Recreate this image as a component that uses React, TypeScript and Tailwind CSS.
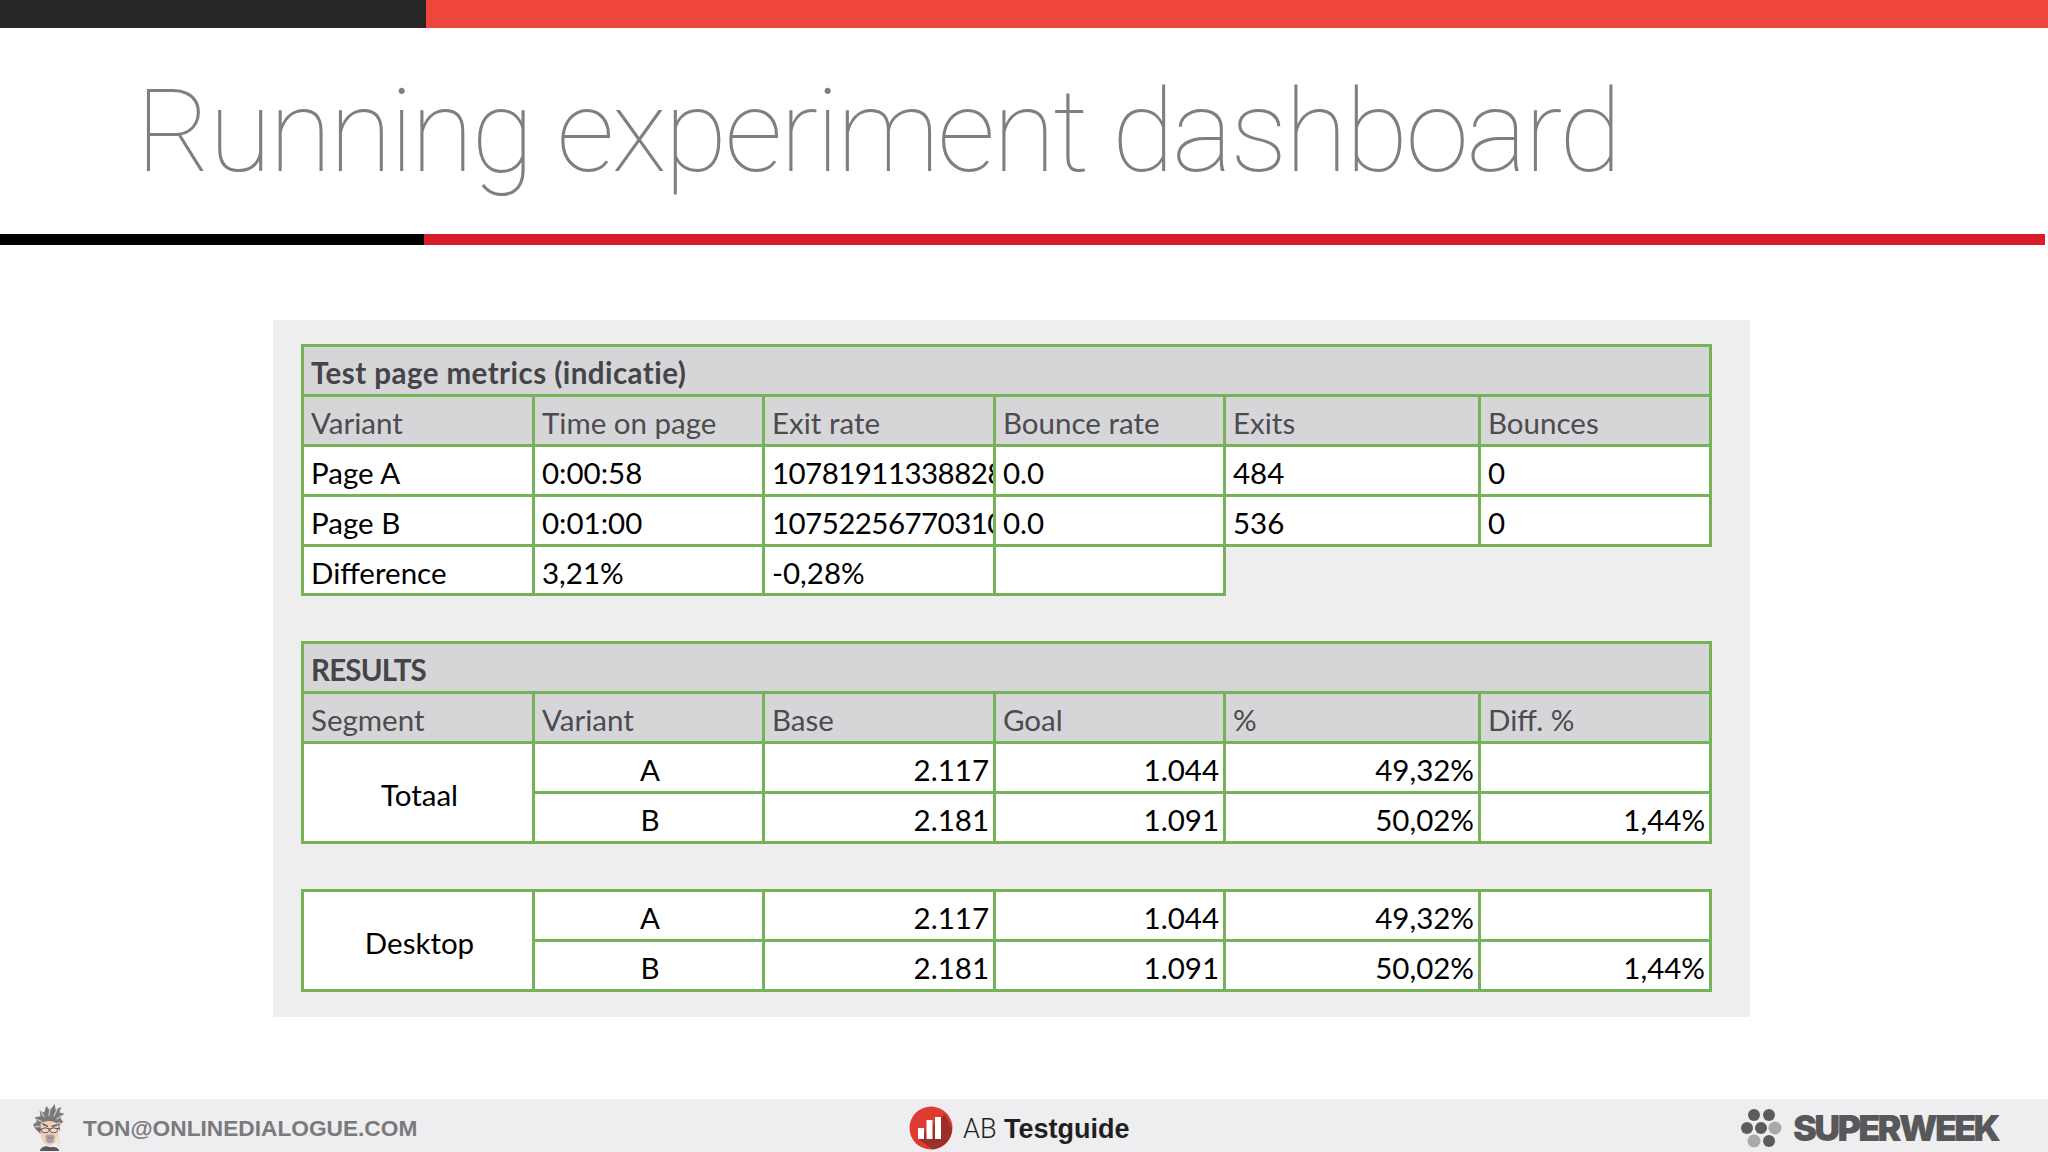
const metricsHead = ['Variant', 'Time on page', 'Exit rate', 'Bounce rate', 'Exits', 'Bounces'];
const metricsRows = [
  ['Page A', '0:00:58', '107819113388289', '0.0', '484', '0'],
  ['Page B', '0:01:00', '107522567703102', '0.0', '536', '0'],
];
const resultsHead = ['Segment', 'Variant', 'Base', 'Goal', '%', 'Diff. %'];
const segmentRows = [
  ['A', '2.117', '1.044', '49,32%', ''],
  ['B', '2.181', '1.091', '50,02%', '1,44%'],
];

const cell = 'h-[50px] border-[3px] border-[#76b257] overflow-hidden whitespace-nowrap pt-[5px] pb-0 pl-[7px] pr-[4px] align-middle';
const headCell = `${cell} bg-[#d6d6d8] text-left`;
const bodyCell = `${cell} bg-white text-black`;
const lastRowCell = `${bodyCell} !h-[49px]`;

function Cols() {
  return (
    <colgroup>
      <col className="w-[231px]" />
      <col className="w-[230px]" />
      <col className="w-[231px]" />
      <col className="w-[230px]" />
      <col className="w-[255px]" />
      <col className="w-[231px]" />
    </colgroup>
  );
}

function TableTitle({ text, className }: { text: string; className: string }) {
  return (
    <tr>
      <th colSpan={6} className={`${headCell} font-bold text-[#444449] ${className}`}>{text}</th>
    </tr>
  );
}

function HeadRow({ cells }: { cells: string[] }) {
  return (
    <tr>
      {cells.map((c) => (
        <th key={c} className={`${headCell} font-normal text-[#4b4b50]`}>{c}</th>
      ))}
    </tr>
  );
}

function Segment({ name }: { name: string }) {
  return (
    <>
      {segmentRows.map((row, i) => (
        <tr key={row[0]}>
          {i === 0 && <td rowSpan={2} className={`${bodyCell} text-center`}>{name}</td>}
          <td className={`${bodyCell} text-center`}>{row[0]}</td>
          {row.slice(1).map((v, j) => (
            <td key={j} className={`${bodyCell} text-right`}>{v}</td>
          ))}
        </tr>
      ))}
    </>
  );
}

const tableClass = "w-[1408px] table-fixed border-collapse font-['Lato',sans-serif] text-[29.5px] leading-none";

function Avatar() {
  return (
    <svg viewBox="0 0 36 50" className="w-[34px] h-[47px]">
      <path d="M4 27 L1 22 L5 19 L3 14 L9 13 L8 7 L13 9 L15 2 L19 7 L24 0 L25 6 L31 3 L29 9 L34 10 L30 15 L33 19 L29 23 L30 29 L24 22 L12 22 L9 32 Z" fill="#77787a" />
      <path d="M9 7 L13 14 M19 4 L18 13 M27 5 L23 13 M4 16 L11 19 M32 12 L26 16 M3 24 L8 24 M31 21 L27 20" stroke="#c4c4c6" strokeWidth="1.5" />
      <path d="M9 21 C13 17 24 17 28 22 L28 33 C28 39 23 44 18 44 C13 44 9 38 9 31 Z" fill="#f3cdb6" />
      <path d="M11 21 L17 24 M27 22 L21 24" stroke="#5a5a5c" strokeWidth="1.6" />
      <path d="M7 27 L29 26" stroke="#5a4a48" strokeWidth="1.2" />
      <ellipse cx="14" cy="28" rx="4" ry="2.6" fill="#eadbd2" stroke="#6a4f4a" strokeWidth="1" />
      <ellipse cx="23" cy="28" rx="4" ry="2.6" fill="#eadbd2" stroke="#6a4f4a" strokeWidth="1" />
      <path d="M14 34 C17 32 21 32 24 34 L23 40 C20 43 16 42 15 39 Z" fill="#a3a3a5" />
      <path d="M17 36 L22 36" stroke="#c9574c" strokeWidth="1" />
      <path d="M25 37 L29 32 L31 40 L27 45 Z" fill="#efe0d2" />
      <path d="M8 50 C10 45 15 44 19 46 C24 45 28 46 29 50 Z" fill="#59585a" />
    </svg>
  );
}

function GuideLogo() {
  return (
    <svg viewBox="0 0 44 44" className="w-[44px] h-[44px]">
      <circle cx="22" cy="22" r="21.5" fill="#de3b33" />
      <path d="M9 33 L36 8 L43 22 A21.5 21.5 0 0 1 24 43.4 Z" fill="#9c2f27" />
      <rect x="9" y="22" width="6" height="11" fill="#fff" />
      <rect x="17.5" y="14" width="6" height="19" fill="#fff" />
      <rect x="26" y="11" width="6" height="22" fill="#fff" />
    </svg>
  );
}

function WeekLogo() {
  return (
    <svg viewBox="0 0 42 40" className="w-[42px] h-[40px]">
      <circle cx="13" cy="7" r="6" fill="#5c5c5e" />
      <circle cx="28" cy="7" r="6" fill="#5c5c5e" />
      <circle cx="6" cy="20" r="6" fill="#5c5c5e" />
      <circle cx="20" cy="20" r="6" fill="#5c5c5e" />
      <circle cx="34" cy="20" r="6.5" fill="#a9a9ab" />
      <circle cx="13" cy="33" r="6.5" fill="#a9a9ab" />
      <circle cx="28" cy="33" r="6" fill="#5c5c5e" />
    </svg>
  );
}

export default function App() {
  return (
    <div className="w-[2048px] h-[1152px] bg-white flex flex-col overflow-hidden">
      {/* top band */}
      <div className="flex h-[28px] shrink-0">
        <div className="w-[426px] bg-[#262626]" />
        <div className="flex-1 bg-[#ee463c]" />
      </div>

      <h1 className="h-[206px] shrink-0 pl-[136px] pt-[39px] font-['Roboto',sans-serif] font-thin text-[115px] leading-[130px] tracking-[-2.6px] text-[#7f7f7f] whitespace-nowrap">
        Running experiment dashboard
      </h1>

      <div className="flex h-[11px] w-[2045px] shrink-0">
        <div className="w-[424px] bg-black" />
        <div className="flex-1 bg-[#d91c2a]" />
      </div>

      {/* pasted spreadsheet */}
      <div className="ml-[273px] mt-[75px] w-[1477px] h-[697px] shrink-0 bg-[#eeeeee] pl-[28px] pt-[24px]">
        <table className={tableClass}>
          <Cols />
          <tbody>
            <TableTitle text="Test page metrics (indicatie)" className="tracking-[0.45px]" />
            <HeadRow cells={metricsHead} />
            {metricsRows.map((row) => (
              <tr key={row[0]}>
                {row.map((v, i) => (
                  <td key={i} className={`${bodyCell} ${i === 2 ? 'tracking-[-0.55px]' : ''}`}>{v}</td>
                ))}
              </tr>
            ))}
            <tr>
              <td className={lastRowCell}>Difference</td>
              <td className={lastRowCell}>3,21%</td>
              <td className={lastRowCell}>-0,28%</td>
              <td className={lastRowCell} />
            </tr>
          </tbody>
        </table>

        <table className={`${tableClass} mt-[45px]`}>
          <Cols />
          <tbody>
            <TableTitle text="RESULTS" className="tracking-[-0.8px]" />
            <HeadRow cells={resultsHead} />
            <Segment name="Totaal" />
          </tbody>
        </table>

        <table className={`${tableClass} mt-[45px]`}>
          <Cols />
          <tbody>
            <Segment name="Desktop" />
          </tbody>
        </table>
      </div>

      {/* footer */}
      <div className="mt-[82px] h-[53px] shrink-0 bg-[#eeeef0] flex items-center pt-[4px]">
        <div className="flex items-center w-[909px] pl-[32px]">
          <Avatar />
          <span className="ml-[17px] pt-[1px] font-['Liberation_Sans',sans-serif] font-bold text-[22.7px] text-[#7a7a7c]">
            TON@ONLINEDIALOGUE.COM
          </span>
        </div>
        <div className="flex items-center gap-[10px]">
          <GuideLogo />
          <span className="pt-[3px] font-['Liberation_Sans',sans-serif] text-[27px] text-[#1f1f1f]">
            <span className="font-['Roboto',sans-serif] font-light">AB</span> <span className="font-bold">Testguide</span>
          </span>
        </div>
        <div className="ml-auto flex items-center gap-[10px] pr-[50px]">
          <WeekLogo />
          <span className="font-['Inter',sans-serif] font-black text-[36px] leading-none tracking-[-2.8px] text-[#58585a]">SUPERWEEK</span>
        </div>
      </div>
    </div>
  );
}
